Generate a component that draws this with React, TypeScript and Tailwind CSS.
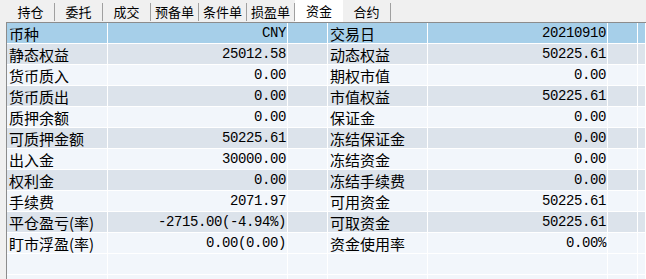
import React from 'react'

const tabs = ['持仓', '委托', '成交', '预备单', '条件单', '损盈单', '资金', '合约']

const rows: [string, string, string, string][] = [
  ['静态权益', '25012.58', '动态权益', '50225.61'],
  ['货币质入', '0.00', '期权市值', '0.00'],
  ['货币质出', '0.00', '市值权益', '50225.61'],
  ['质押余额', '0.00', '保证金', '0.00'],
  ['可质押金额', '50225.61', '冻结保证金', '0.00'],
  ['出入金', '30000.00', '冻结资金', '0.00'],
  ['权利金', '0.00', '冻结手续费', '0.00'],
  ['手续费', '2071.97', '可用资金', '50225.61'],
  ['平仓盈亏(率)', '-2715.00(-4.94%)', '可取资金', '50225.61'],
  ['盯市浮盈(率)', '0.00(0.00)', '资金使用率', '0.00%'],
  ['', '', '', ''],
  ['', '', '', ''],
]

const cjk = "font-['Noto_Sans_CJK_SC',sans-serif]"
const mono = "font-['Liberation_Mono','Noto_Sans_CJK_SC',monospace] text-[14px] tracking-[-0.4px]"

function Row({ cells, bg }: { cells: [string, string, string, string]; bg: string }) {
  const cell = `h-[21px] leading-[17px] border-r border-b border-white flex items-center whitespace-nowrap ${bg}`
  return (
    <div className="flex text-black">
      <div className={`${cell} w-[101px] pl-[2px] text-[15px] ${cjk}`}>{cells[0]}</div>
      <div className={`${cell} w-[180px] justify-end pr-[1px] ${mono}`}>{cells[1]}</div>
      <div className={`${cell} w-[40px]`} />
      <div className={`${cell} w-[100px] pl-[2px] text-[15px] ${cjk}`}>{cells[2]}</div>
      <div className={`${cell} w-[180px] justify-end pr-[1px] ${mono}`}>{cells[3]}</div>
      <div className={`${cell} w-[30px]`} />
      <div className={`${cell} flex-1`} />
    </div>
  )
}

export default function App() {
  return (
    <div className="w-[646px] h-[279px] bg-[#f0f0f0] overflow-hidden">
      {/* tab strip */}
      <div className="h-[22px] flex pl-[7px]">
        {tabs.map((t) => (
          <div
            key={t}
            className={`w-[48px] flex items-center justify-center text-[13px] leading-[16px] text-black ${cjk} ${
              t === '资金' ? 'bg-white h-[22px]' : 'border-r border-[#a0a0a0] h-[18px] mt-[3px]'
            }`}
          >
            {t}
          </div>
        ))}
      </div>

      {/* fund table */}
      <div className="ml-[6px] border-l border-t border-[#8c8c8c] bg-[#f2f6fb] h-[257px] overflow-hidden">
        <Row cells={['币种', 'CNY', '交易日', '20210910']} bg="bg-[#a6cfe9]" />
        {rows.map((r, i) => (
          <Row
            key={i}
            cells={r}
            bg={i < 10 && i % 2 === 0 ? 'bg-[#dce3eb]' : 'bg-[#f2f6fb]'}
          />
        ))}
      </div>
    </div>
  )
}
